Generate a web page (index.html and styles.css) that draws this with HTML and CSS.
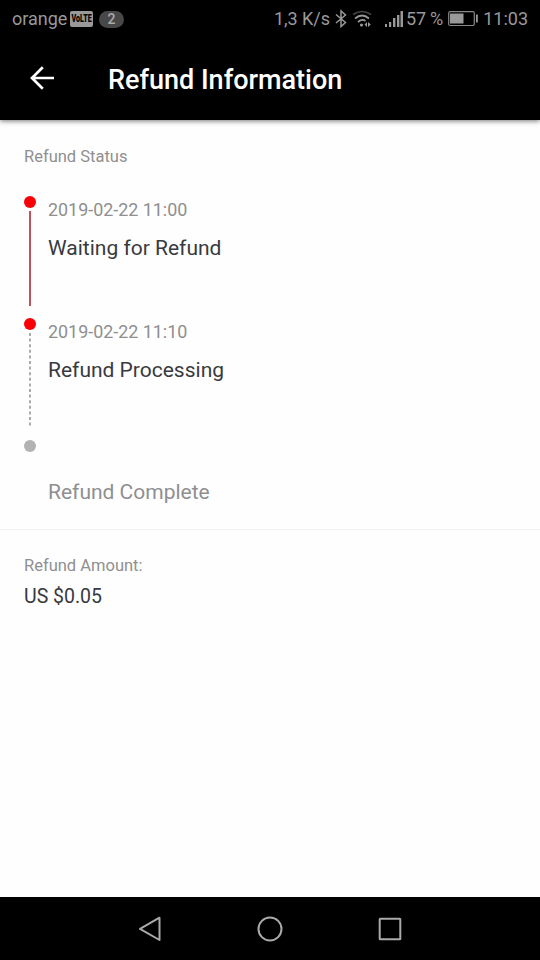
FILE: index.html
```html
<!DOCTYPE html>
<html lang="en">
<head>
<meta charset="utf-8">
<title>Refund Information</title>
<link rel="stylesheet" href="styles.css">
</head>
<body>
<div class="statusbar">
  <span class="carrier">orange</span>
  <span class="volte"><b>VoLTE</b></span>
  <span class="count">2</span>
  <span class="speed">1,3 K/s</span>
  <svg class="bluetooth" width="12" height="20" viewBox="0 0 12 20"><path d="M1 5.500 10.500 13.500 6 17.500V2l4.500 4L1 14" fill="none" stroke="#999" stroke-width="1.500"/></svg>
  <svg class="wifi" width="20" height="18" viewBox="0 0 20 18"><g fill="none" stroke-width="1.700"><path d="M1 4.500Q10-1.500 19 4.500" stroke="#444"/><path d="M3 8.500Q10 2.500 17 8.500M6 12Q10 8.500 13.500 11" stroke="#999"/></g><circle cx="9.500" cy="15" r="1.600" fill="#999"/><path d="M15 12v5l-2.500-2.500zM16 12v5l2.800-2.500z" fill="#999"/></svg>
  <svg class="signal" width="18" height="16" viewBox="0 0 18 16"><path d="M0 13h2v3H0zM4 11h2.200v5H4zM8 7h2.400v9H8zM12 4h2.400v12H12zM15.500 0h2.500v16h-2.500z" fill="#999"/></svg>
  <span class="percent">57 %</span>
  <svg class="battery" width="31" height="16" viewBox="0 0 31 16"><rect x=".7" y=".7" width="25.600" height="13.800" rx="1.500" fill="none" stroke="#888" stroke-width="1.200"/><path d="M2 2.500h13.500v10H2zM28 3.500h1.800v8H28z" fill="#999"/></svg>
  <span class="clock">11:03</span>
</div>
<header class="appbar">
  <svg class="back" width="26" height="26" viewBox="0 0 26 26"><path d="M25 13H2.800M13.800 2.200 3 13l10.800 10.800" fill="none" stroke="#fff" stroke-width="2.700"/></svg>
  <h1>Refund Information</h1>
</header>
<main>
  <section class="status">
    <h2 class="label">Refund Status</h2>
    <ol class="timeline">
      <li class="step done">
        <div class="rail"><i class="dot"></i><i class="line"></i></div>
        <div><div class="date">2019-02-22 11:00</div><div class="name">Waiting for Refund</div></div>
      </li>
      <li class="step current">
        <div class="rail"><i class="dot"></i><svg class="dashes" width="2" height="93"><path d="M1 0V93" stroke="#aaa" stroke-width="2" stroke-dasharray="3 2.600"/></svg></div>
        <div><div class="date">2019-02-22 11:10</div><div class="name">Refund Processing</div></div>
      </li>
      <li class="step pending">
        <div class="rail"><i class="dot"></i></div>
        <div><div class="date"></div><div class="name">Refund Complete</div></div>
      </li>
    </ol>
  </section>
  <section class="amount">
    <div class="label">Refund Amount:</div>
    <div class="value">US $0.05</div>
  </section>
</main>
<nav class="navbar">
  <svg width="26" height="26" viewBox="0 0 26 26"><path d="M22.500 1.700V24L3 12.900Z"/></svg>
  <svg width="26" height="26" viewBox="0 0 26 26"><circle cx="13" cy="13" r="11.500"/></svg>
  <svg width="26" height="26" viewBox="0 0 26 26"><rect x="2.700" y="2.700" width="20.600" height="20.600" rx=".5"/></svg>
</nav>
</body>
</html>
```
FILE: styles.css
```css
* { box-sizing: border-box; margin: 0; padding: 0; }
body {
  width: 540px; height: 960px; display: flex; flex-direction: column;
  background: #fefefe; font-family: Roboto, "Liberation Sans", sans-serif; overflow: hidden;
}
.statusbar {
  height: 36px; flex: none; display: flex; align-items: center; background: #000;
  padding: 2px 12px 0; color: #999; font-size: 18px; line-height: 36px; white-space: nowrap;
}
.carrier { width: 58px; }
.volte {
  width: 23px; height: 16px; border-radius: 2px; background: #999; color: #000;
  font: 900 11px/16px Roboto, sans-serif; display: flex; justify-content: center;
}
.volte b { font-weight: 900; transform: scaleX(.65); }
.count {
  width: 25px; height: 17px; margin-left: 6px; border-radius: 9px; background: #484848; color: #aaa;
  font-size: 14px; line-height: 17px; text-align: center; font-weight: 500;
}
.speed { margin-left: 150px; width: 56px; letter-spacing: -0.05px; }
.bluetooth { margin-left: 5px; }
.wifi { margin-left: 5px; }
.signal { margin-left: 13px; }
.percent { margin-left: 3px; width: 37px; letter-spacing: -0.2px; }
.battery { margin-left: 5px; }
.clock { margin-left: auto; }
.appbar {
  height: 84px; flex: none; display: flex; align-items: center; padding-left: 29px;
  background: #000; color: #fff; box-shadow: 0 1px 5px rgba(0, 0, 0, .55); z-index: 1;
}
.appbar h1 { margin: 4px 0 0 53px; font-size: 27px; font-weight: 500; line-height: 32px; }
main { flex: 1; }
.status { height: 410px; padding: 27px 24px 0; border-bottom: 1px solid #f0f0f0; }
.label { color: #8f8f90; font-size: 16.5px; font-weight: 400; line-height: 20px; }
.timeline { list-style: none; padding-top: 29px; }
.step { height: 122px; display: flex; gap: 12px; }
.rail { width: 12px; display: flex; flex-direction: column; align-items: center; }
.dot { width: 12px; height: 12px; flex: none; border-radius: 50%; background: #fa0006; }
.pending .dot { background: #b2b2b4; }
.line { width: 2px; height: 95px; margin-top: 3px; background: #c05359; }
.dashes { margin-top: 3px; }
.date { height: 24px; margin-top: 1px; color: #8f8f90; font-size: 17.9px; line-height: 25px; }
.name { margin-top: 13px; color: #383a40; font-size: 21px; line-height: 28px; }
.pending .name { color: #8f8f90; }
.amount { padding: 26px 24px 0; }
.value { margin-top: 9px; color: #383a40; font-size: 19.5px; line-height: 24px; }
.navbar {
  height: 63px; flex: none; display: flex; justify-content: center; align-items: center;
  gap: 94px; background: #000;
}
.navbar svg { fill: none; stroke: #aaa; stroke-width: 2; stroke-linejoin: round; }
```
